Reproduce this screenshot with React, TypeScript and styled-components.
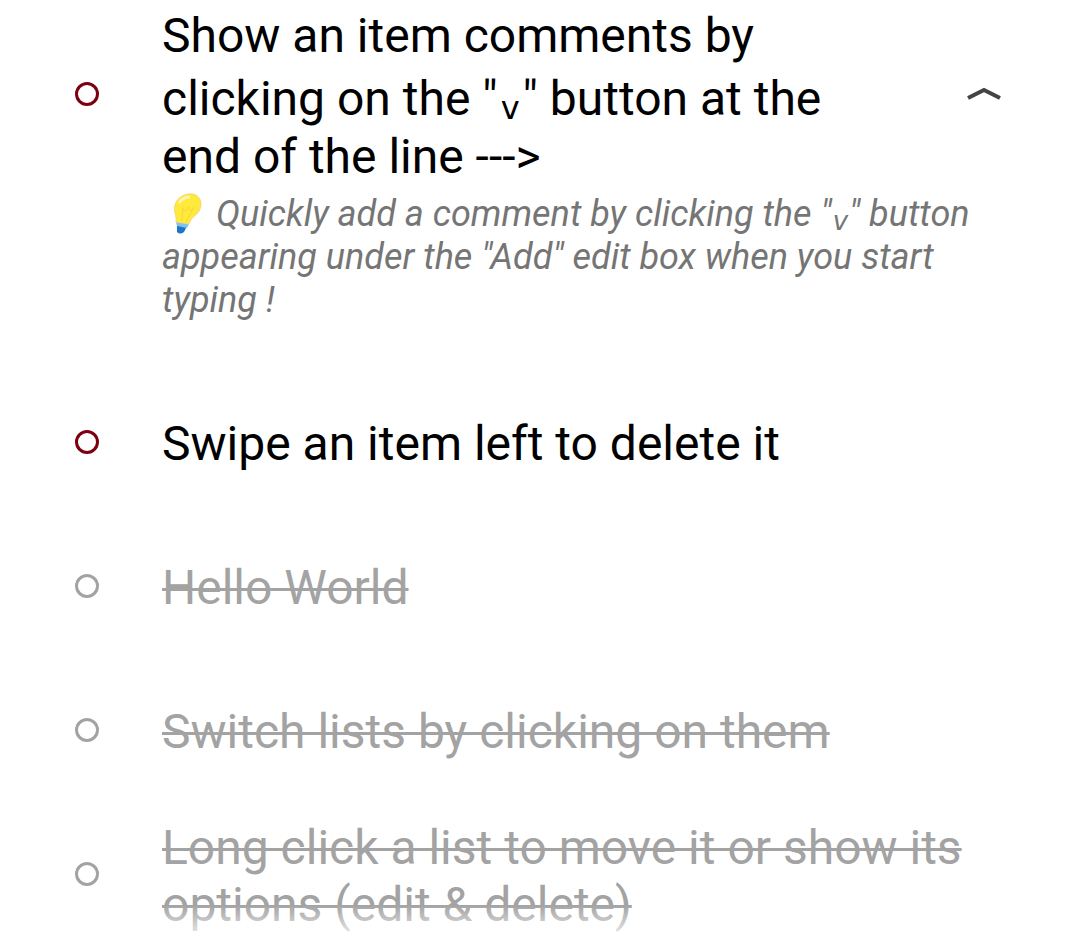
import React, { useState } from "react";
import styled, { createGlobalStyle } from "styled-components";

const GlobalStyle = createGlobalStyle`
  body {
    margin: 0;
    background: #fff;
    font-family: Roboto, "Noto Sans", sans-serif;
  }
`;

const Page = styled.main`
  position: relative;
  height: 100vh;
  overflow: hidden;
`;

const List = styled.ul`
  margin: 0;
  padding: 0;
  list-style: none;
`;

const Item = styled.li<{ $open?: boolean }>`
  padding-bottom: ${(p) => (p.$open ? 48 : 0)}px;
`;

const Row = styled.div<{ $tall?: boolean }>`
  display: flex;
  align-items: center;
  min-height: ${(p) => (p.$tall ? 188 : 144)}px;
  padding-left: 75px;
`;

const Tick = styled.input<{ $done?: boolean }>`
  appearance: none;
  flex: none;
  box-sizing: border-box;
  width: 24px;
  height: 24px;
  margin: 0 63px 0 0;
  border: 3px solid ${(p) => (p.$done ? "#a3a3a3" : "#7d0010")};
  border-radius: 50%;
`;

const Title = styled.label<{ $done?: boolean }>`
  flex: 1;
  padding-top: 3px;
  font-size: 48px;
  line-height: 57px;
  color: ${(p) => (p.$done ? "#a3a3a3" : "#000")};
  text-decoration: ${(p) => (p.$done ? "line-through 3px" : "none")};
`;

const Caret = styled.span<{ $small?: boolean }>`
  display: inline-block;
  padding: ${(p) => (p.$small ? "0 1px" : "30px 3px 6px")};
  font-family: "DejaVu Sans", sans-serif;
  font-size: ${(p) => (p.$small ? 26 : 32)}px;
  line-height: 28px;
  vertical-align: -4px;
`;

const Toggle = styled.button`
  flex: none;
  display: flex;
  align-items: center;
  justify-content: center;
  width: 192px;
  height: 96px;
  padding: 0;
  border: 0;
  background: none;
`;

const Comment = styled.p`
  margin: 0 72px 0 162px;
  padding-top: 5px;
  font-size: 36px;
  line-height: 43px;
  font-style: italic;
  color: #757575;
`;

const Bulb = styled.svg`
  width: 32px;
  height: 42px;
  margin: 0 12px 0 10px;
  vertical-align: -9px;
`;

const Fade = styled.div`
  position: absolute;
  inset: auto 0 0;
  height: 40px;
  background: linear-gradient(rgba(255, 255, 255, 0), #fff);
  pointer-events: none;
`;

const doneItems = [
  "Hello World",
  "Switch lists by clicking on them",
  "Long click a list to move it or show its options (edit & delete)",
];

export default function App() {
  const [open, setOpen] = useState(true);
  return (
    <Page>
      <GlobalStyle />
      <List>
        <Item $open>
          <Row $tall>
            <Tick type="checkbox" id="comments" />
            <Title htmlFor="comments">
              Show an item comments by clicking on the "<Caret>v</Caret>" button at the end of the line ---&gt;
            </Title>
            <Toggle aria-label="Toggle comment" aria-expanded={open} onClick={() => setOpen(!open)}>
              <svg width="38" height="18" viewBox="0 0 38 18" fill="none" stroke="#444" strokeWidth="4">
                <path d="M3 13 19 5 35 13" />
              </svg>
            </Toggle>
          </Row>
          {open && (
            <Comment>
              <Bulb viewBox="0 0 32 42" aria-hidden="true">
                <path d="M5 29 16 31 12 39Q8 42 5 39Z" fill="#1d74c8" />
                <path d="M4 29 17 31 15 35 5 33Z" fill="#7cc4ef" />
                <path
                  d="M4 29C5 22 1 19 3 12C5 4 14 0 21 1C29 3 31 11 27 18C24 23 19 24 17 31Z"
                  fill="#ffe93b"
                  stroke="#f3d77a"
                />
                <path d="M10 28 11 15 14 18 17 14 19 18 22 14 14 29" fill="none" stroke="#f5d93a" />
                <path d="M7 10Q11 4 18 4" fill="none" stroke="#fff7a8" strokeWidth="3" />
              </Bulb>
              Quickly add a comment by clicking the "<Caret $small>v</Caret>" button appearing under the "Add" edit box
              when you start typing !
            </Comment>
          )}
        </Item>
        <Item>
          <Row>
            <Tick type="checkbox" id="swipe" />
            <Title htmlFor="swipe">Swipe an item left to delete it</Title>
          </Row>
        </Item>
        {doneItems.map((text, i) => (
          <Item key={text}>
            <Row>
              <Tick $done type="checkbox" id={`done-${i}`} defaultChecked />
              <Title $done htmlFor={`done-${i}`}>
                {text}
              </Title>
            </Row>
          </Item>
        ))}
      </List>
      <Fade />
    </Page>
  );
}
